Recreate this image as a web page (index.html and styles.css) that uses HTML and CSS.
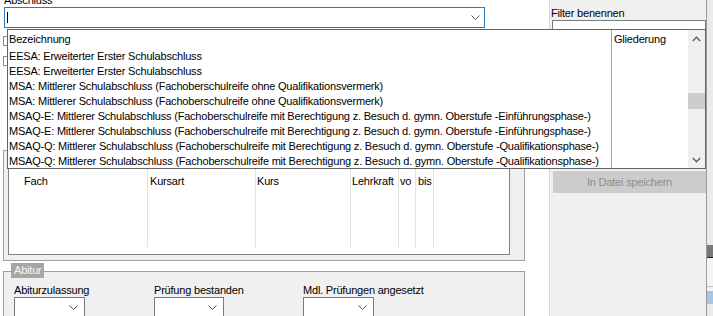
FILE: index.html
```html
<!DOCTYPE html>
<html lang="de">

<head>
    <meta charset="UTF-8">
    <meta name="viewport" content="width=device-width, initial-scale=1.0">
    <title>Abschluss</title>
    <link rel="stylesheet" href="styles.css">
</head>

<body>
    <div class="screen">
        <div class="main">
            <div class="top-label">Abschluss</div>
            <div class="combo combo-main">
                <span class="caret"></span>
                <svg class="chev" width="9" height="5" viewBox="0 0 9 5"><polyline points="0.5,0.5 4.5,4.5 8.5,0.5" /></svg>
            </div>

            <!-- controls covered by the open list -->
            <div class="ghost-rows">
                <div class="ghost"></div>
                <div class="ghost"></div>
            </div>

            <div class="group group-kurse">
                <div class="listview">
                    <div class="lv-col col-fach">Fach</div>
                    <div class="lv-col col-kursart">Kursart</div>
                    <div class="lv-col col-kurs">Kurs</div>
                    <div class="lv-col col-lehrkraft">Lehrkraft</div>
                    <div class="lv-col col-vo">vo</div>
                    <div class="lv-col col-bis">bis</div>
                </div>
            </div>

            <div class="group group-abitur">
                <span class="legend">Abitur</span>
                <div class="abi-fields">
                    <div class="abi-field f1">
                        <div class="lbl">Abiturzulassung</div>
                        <div class="combo combo-small w71">
                            <svg class="chev" width="9" height="5" viewBox="0 0 9 5"><polyline points="0.5,0.5 4.5,4.5 8.5,0.5" /></svg>
                        </div>
                    </div>
                    <div class="abi-field f2">
                        <div class="lbl">Prüfung bestanden</div>
                        <div class="combo combo-small w70">
                            <svg class="chev" width="9" height="5" viewBox="0 0 9 5"><polyline points="0.5,0.5 4.5,4.5 8.5,0.5" /></svg>
                        </div>
                    </div>
                    <div class="abi-field f3">
                        <div class="lbl">Mdl. Prüfungen angesetzt</div>
                        <div class="combo combo-small w71">
                            <svg class="chev" width="9" height="5" viewBox="0 0 9 5"><polyline points="0.5,0.5 4.5,4.5 8.5,0.5" /></svg>
                        </div>
                    </div>
                </div>
            </div>
        </div>

        <aside class="side">
            <div class="side-label">Filter benennen</div>
            <div class="side-input"></div>
            <button class="btn-save" disabled>In Datei speichern</button>
        </aside>

        <div class="edge">
            <div class="edge-space"></div>
            <div class="edge-dark"></div>
            <div class="edge-line"></div>
            <div class="edge-light"></div>
            <div class="edge-sep"></div>
            <div class="edge-gap"></div>
            <div class="edge-blue"></div>
        </div>

        <!-- open drop-down list of the Abschluss combo -->
        <div class="dropdown">
            <div class="dd-main">
                <div class="dd-head">Bezeichnung</div>
                <div class="dd-row">EESA: Erweiterter Erster Schulabschluss</div>
                <div class="dd-row">EESA: Erweiterter Erster Schulabschluss</div>
                <div class="dd-row">MSA: Mittlerer Schulabschluss (Fachoberschulreife ohne Qualifikationsvermerk)</div>
                <div class="dd-row">MSA: Mittlerer Schulabschluss (Fachoberschulreife ohne Qualifikationsvermerk)</div>
                <div class="dd-row">MSAQ-E: Mittlerer Schulabschluss (Fachoberschulreife mit Berechtigung z. Besuch d. gymn. Oberstufe -Einführungsphase-)</div>
                <div class="dd-row">MSAQ-E: Mittlerer Schulabschluss (Fachoberschulreife mit Berechtigung z. Besuch d. gymn. Oberstufe -Einführungsphase-)</div>
                <div class="dd-row">MSAQ-Q: Mittlerer Schulabschluss (Fachoberschulreife mit Berechtigung z. Besuch d. gymn. Oberstufe -Qualifikationsphase-)</div>
                <div class="dd-row">MSAQ-Q: Mittlerer Schulabschluss (Fachoberschulreife mit Berechtigung z. Besuch d. gymn. Oberstufe -Qualifikationsphase-)</div>
            </div>
            <div class="dd-side">
                <div class="dd-head">Gliederung</div>
            </div>
            <div class="scrollbar">
                <div class="sb-btn">
                    <svg width="9" height="6" viewBox="0 0 9 6"><polyline points="0.8,5 4.5,1.3 8.2,5" /></svg>
                </div>
                <div class="sb-track">
                    <div class="sb-thumb"></div>
                </div>
                <div class="sb-btn">
                    <svg width="9" height="6" viewBox="0 0 9 6"><polyline points="0.8,1 4.5,4.7 8.2,1" /></svg>
                </div>
            </div>
        </div>
    </div>
</body>

</html>
```

FILE: styles.css
```css
* {
    box-sizing: border-box;
}

body {
    margin: 0;
    background: #fff;
    font-family: "Liberation Sans", Arial, sans-serif;
    font-size: 11px;
    letter-spacing: -0.2px;
    color: #000;
}

.screen {
    position: relative;
    display: flex;
    width: 713px;
    height: 316px;
    overflow: hidden;
}

.main {
    width: 549px;
    flex: none;
}

.top-label {
    height: 13px;
    line-height: 13px;
    margin-top: -6px;
    padding-left: 4px;
}

.combo {
    display: flex;
    align-items: center;
    background: #fff;
    border: 1px solid #7a7a7a;
}

.chev polyline {
    fill: none;
    stroke: #555;
    stroke-width: 1;
}

.combo-main {
    margin-left: 4px;
    width: 481px;
    height: 21px;
    border-color: #2b79b8;
    justify-content: space-between;
    padding: 0 4px 0 2px;
}

.caret {
    width: 1px;
    height: 11px;
    background: #000;
}

.ghost-rows {
    height: 122px;
    padding-top: 8px;
}

.ghost {
    margin-left: 3px;
    width: 300px;
    height: 10px;
    border: 1px solid #8a8a8a;
    margin-bottom: 10px;
}

.group {
    margin-left: 3px;
    width: 522px;
    border: 1px solid #a0a0a0;
    background: #f0f0f0;
}

.group-kurse {
    height: 111px;
    padding-top: 17px;
}

.listview {
    display: flex;
    margin-left: 4px;
    width: 502px;
    height: 87px;
    border: 1px solid #828282;
    background: #fff;
}

.lv-col {
    height: 78px;
    padding-top: 5px;
    line-height: 14px;
    border-right: 1px solid #e3e3e3;
    white-space: nowrap;
}

.col-fach {
    width: 139px;
    padding-left: 15px;
}

.col-kursart {
    width: 108px;
    padding-left: 2px;
}

.col-kurs {
    width: 95px;
    padding-left: 1px;
}

.col-lehrkraft {
    width: 48px;
    padding-left: 1px;
}

.col-vo {
    width: 17px;
    padding-left: 1px;
}

.col-bis {
    width: 18px;
    padding-left: 2px;
}

.group-abitur {
    position: relative;
    margin-top: 10px;
    height: 60px;
    border-bottom: none;
}

.legend {
    position: absolute;
    left: 7px;
    top: -9px;
    height: 15px;
    line-height: 15px;
    padding: 0 2px 0 3px;
    background: #a6a6a6;
    color: #f6f6f6;
}

.abi-fields {
    display: flex;
    padding: 11px 0 0 10px;
}

.abi-field .lbl {
    line-height: 14px;
    white-space: nowrap;
}

.f1 {
    width: 140px;
}

.f2 {
    width: 149px;
}

.combo-small {
    height: 21px;
    justify-content: flex-end;
    padding-right: 6px;
}

.w71 {
    width: 71px;
}

.w70 {
    width: 70px;
}

.side {
    width: 158px;
    flex: none;
    background: #f0f0f0;
    border-left: 1px solid #d8d8d8;
    border-right: 1px solid #9a9a9a;
    display: flex;
    flex-direction: column;
    align-items: flex-start;
}

.side-label {
    margin-top: 6px;
    padding-left: 1px;
    line-height: 14px;
}

.side-input {
    margin-left: 2px;
    width: 154px;
    height: 21px;
    background: #fff;
    border: 1px solid #7a7a7a;
}

.btn-save {
    margin: 130px 0 0 3px;
    width: 153px;
    height: 22px;
    padding: 0;
    border: none;
    background: #cccccc;
    color: #8c8c8c;
    font-family: inherit;
    font-size: 11px;
    letter-spacing: -0.2px;
}

.edge {
    flex: 1;
    background: #eaeaea;
}

.edge-space {
    height: 245px;
}

.edge-dark {
    height: 12px;
    background: #787878;
}

.edge-line {
    height: 1px;
    background: #222;
}

.edge-light {
    height: 28px;
    background: #f4f4f4;
}

.edge-sep {
    height: 1px;
    background: #c4c4c4;
}

.edge-gap {
    height: 4px;
    background: #f4f4f4;
}

.edge-blue {
    height: 13px;
    background: #a8c4e6;
}

/* open list */
.dropdown {
    position: absolute;
    left: 7px;
    top: 29px;
    width: 699px;
    height: 140px;
    border: 1px solid #646464;
    background: #fff;
    display: flex;
    overflow: hidden;
}

.dd-main {
    width: 604px;
    border-right: 1px solid #a8a8a8;
    white-space: nowrap;
    overflow: hidden;
}

.dd-side {
    width: 76px;
}

.dd-head {
    padding: 2px 0 1.5px 1px;
    line-height: 15px;
}

.dd-side .dd-head {
    padding-left: 2px;
}

.dd-row {
    height: 15px;
    line-height: 15px;
    padding-left: 1px;
}

.scrollbar {
    width: 17px;
    background: #f0f0f0;
    display: flex;
    flex-direction: column;
}

.sb-btn {
    height: 17px;
    display: flex;
    align-items: center;
    justify-content: center;
}

.sb-btn polyline {
    fill: none;
    stroke: #606060;
    stroke-width: 1.4;
}

.sb-track {
    flex: 1;
}

.sb-thumb {
    margin-top: 46px;
    height: 16px;
    background: #cdcdcd;
}
```
